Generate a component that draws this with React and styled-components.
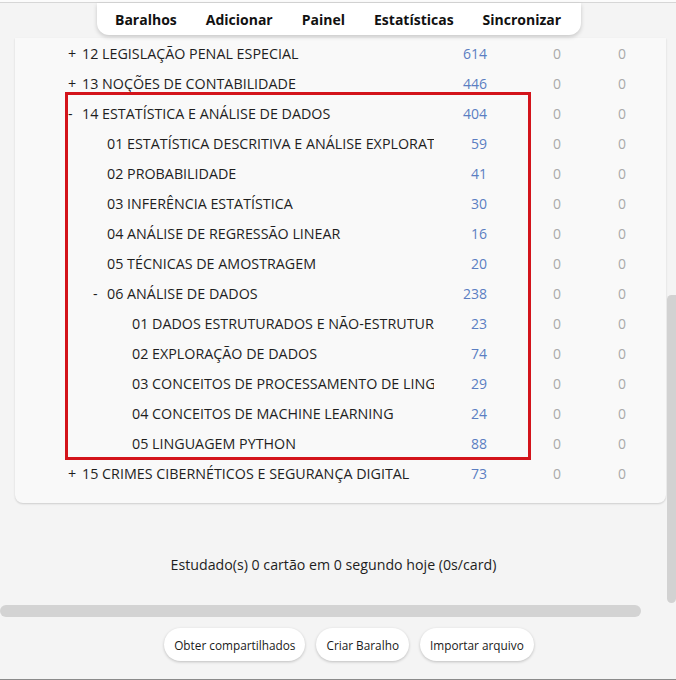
import React from 'react';
import styled, { createGlobalStyle } from 'styled-components';

const GlobalStyle = createGlobalStyle`
  html, body {
    margin: 0;
    padding: 0;
    background: #f4f4f4;
  }
  body {
    font-family: "Open Sans", "Noto Sans", "Liberation Sans", sans-serif;
    color: #1e1e1e;
  }
`;

const Page = styled.div`
  width: 676px;
  height: 680px;
  display: flex;
  flex-direction: column;
  overflow: hidden;
  border-bottom: 1px solid #8a8a8a;
  box-sizing: border-box;
`;

const TopEdge = styled.div`
  height: 2px;
  border-bottom: 1px solid #d6d6d6;
  background: #fbfbfb;
`;

const Body = styled.div`
  display: flex;
  height: 601px;
`;

const Main = styled.div`
  width: 667px;
  display: flex;
  flex-direction: column;
`;

const Toolbar = styled.nav`
  width: 484px;
  height: 32px;
  margin-left: 97px;
  box-sizing: border-box;
  padding: 0 18px;
  display: flex;
  align-items: center;
  gap: 29px;
  background: #ffffff;
  border-radius: 0 0 12px 12px;
  box-shadow: 0 2px 4px rgba(0, 0, 0, 0.18);
  position: relative;
  z-index: 1;
`;

const NavItem = styled.span`
  font-size: 14px;
  font-weight: 700;
  color: #111;
  white-space: nowrap;
`;

const Card = styled.div`
  margin: 3px 1px 0 15px;
  padding-bottom: 15px;
  background: #f9f9f9;
  border-radius: 0 0 8px 8px;
  box-shadow: 0 1px 2px rgba(0, 0, 0, 0.16);
`;

const Row = styled.div`
  display: grid;
  grid-template-columns: 366px 53px 74px 65px;
  align-items: center;
  height: 30px;
  padding-left: 53px;
  font-size: 14px;
`;

const Name = styled.div`
  padding-left: ${p => p.$depth * 25}px;
  white-space: nowrap;
  overflow: hidden;
  font-size: 14.3px;
  color: #1e1e1e;
`;

const Marker = styled.span`
  display: inline-block;
  width: 14px;
`;

const Count = styled.div`
  text-align: right;
  color: ${p => (p.$muted ? '#a9a9a9' : '#5b7ec2')};
`;

const Highlight = styled.div`
  position: relative;
  &::after {
    content: '';
    position: absolute;
    left: 50px;
    top: -6px;
    width: 466px;
    bottom: -2px;
    box-sizing: border-box;
    border: 3px solid #d3141b;
    pointer-events: none;
  }
`;

const Stats = styled.div`
  margin-top: 52px;
  text-align: center;
  font-size: 14.2px;
  line-height: 20px;
  color: #1e1e1e;
`;

const VTrack = styled.div`
  width: 9px;
`;

const VThumb = styled.div`
  margin-top: 292px;
  height: 308px;
  background: #d2d2d2;
  border-radius: 5px 0 5px 5px;
`;

const HThumb = styled.div`
  width: 641px;
  height: 12px;
  margin-top: 1px;
  background: #d3d3d3;
  border-radius: 6px;
`;

const Actions = styled.div`
  display: flex;
  justify-content: center;
  gap: 11px;
  margin-top: 11px;
  padding-left: 22px;
`;

const Button = styled.button`
  height: 33px;
  padding: 0 10px;
  border: none;
  border-radius: 17px;
  background: #ffffff;
  box-shadow: 0 1px 3px rgba(0, 0, 0, 0.22);
  font-family: inherit;
  font-size: 11.8px;
  color: #1a1a1a;
`;

const decks = [
  { name: '12 LEGISLAÇÃO PENAL ESPECIAL', count: 614, collapsed: true },
  { name: '13 NOÇÕES DE CONTABILIDADE', count: 446, collapsed: true },
  {
    name: '14 ESTATÍSTICA E ANÁLISE DE DADOS',
    count: 404,
    marked: true,
    children: [
      { name: '01 ESTATÍSTICA DESCRITIVA E ANÁLISE EXPLORATÓRIA DE DADOS', count: 59 },
      { name: '02 PROBABILIDADE', count: 41 },
      { name: '03 INFERÊNCIA ESTATÍSTICA', count: 30 },
      { name: '04 ANÁLISE DE REGRESSÃO LINEAR', count: 16 },
      { name: '05 TÉCNICAS DE AMOSTRAGEM', count: 20 },
      {
        name: '06 ANÁLISE DE DADOS',
        count: 238,
        children: [
          { name: '01 DADOS ESTRUTURADOS E NÃO-ESTRUTURADOS', count: 23 },
          { name: '02 EXPLORAÇÃO DE DADOS', count: 74 },
          { name: '03 CONCEITOS DE PROCESSAMENTO DE LINGUAGEM NATURAL', count: 29 },
          { name: '04 CONCEITOS DE MACHINE LEARNING', count: 24 },
          { name: '05 LINGUAGEM PYTHON', count: 88 },
        ],
      },
    ],
  },
  { name: '15 CRIMES CIBERNÉTICOS E SEGURANÇA DIGITAL', count: 73, collapsed: true },
];

function DeckNode({ deck, depth }) {
  const marker = deck.collapsed ? '+' : deck.children ? '-' : '';
  const node = (
    <>
      <Row>
        <Name $depth={depth}>
          <Marker>{marker}</Marker>
          {deck.name}
        </Name>
        <Count>{deck.count}</Count>
        <Count $muted>0</Count>
        <Count $muted>0</Count>
      </Row>
      {deck.children && !deck.collapsed &&
        deck.children.map(child => <DeckNode key={child.name} deck={child} depth={depth + 1} />)}
    </>
  );
  return deck.marked ? <Highlight>{node}</Highlight> : node;
}

export default function App() {
  return (
    <Page>
      <GlobalStyle />
      <TopEdge />
      <Body>
        <Main>
          <Toolbar>
            <NavItem>Baralhos</NavItem>
            <NavItem>Adicionar</NavItem>
            <NavItem>Painel</NavItem>
            <NavItem>Estatísticas</NavItem>
            <NavItem>Sincronizar</NavItem>
          </Toolbar>
          <Card>
            {decks.map(deck => <DeckNode key={deck.name} deck={deck} depth={0} />)}
          </Card>
          <Stats>Estudado(s) 0 cartão em 0 segundo hoje (0s/card)</Stats>
        </Main>
        <VTrack>
          <VThumb />
        </VTrack>
      </Body>
      <HThumb />
      <Actions>
        <Button>Obter compartilhados</Button>
        <Button>Criar Baralho</Button>
        <Button>Importar arquivo</Button>
      </Actions>
    </Page>
  );
}
